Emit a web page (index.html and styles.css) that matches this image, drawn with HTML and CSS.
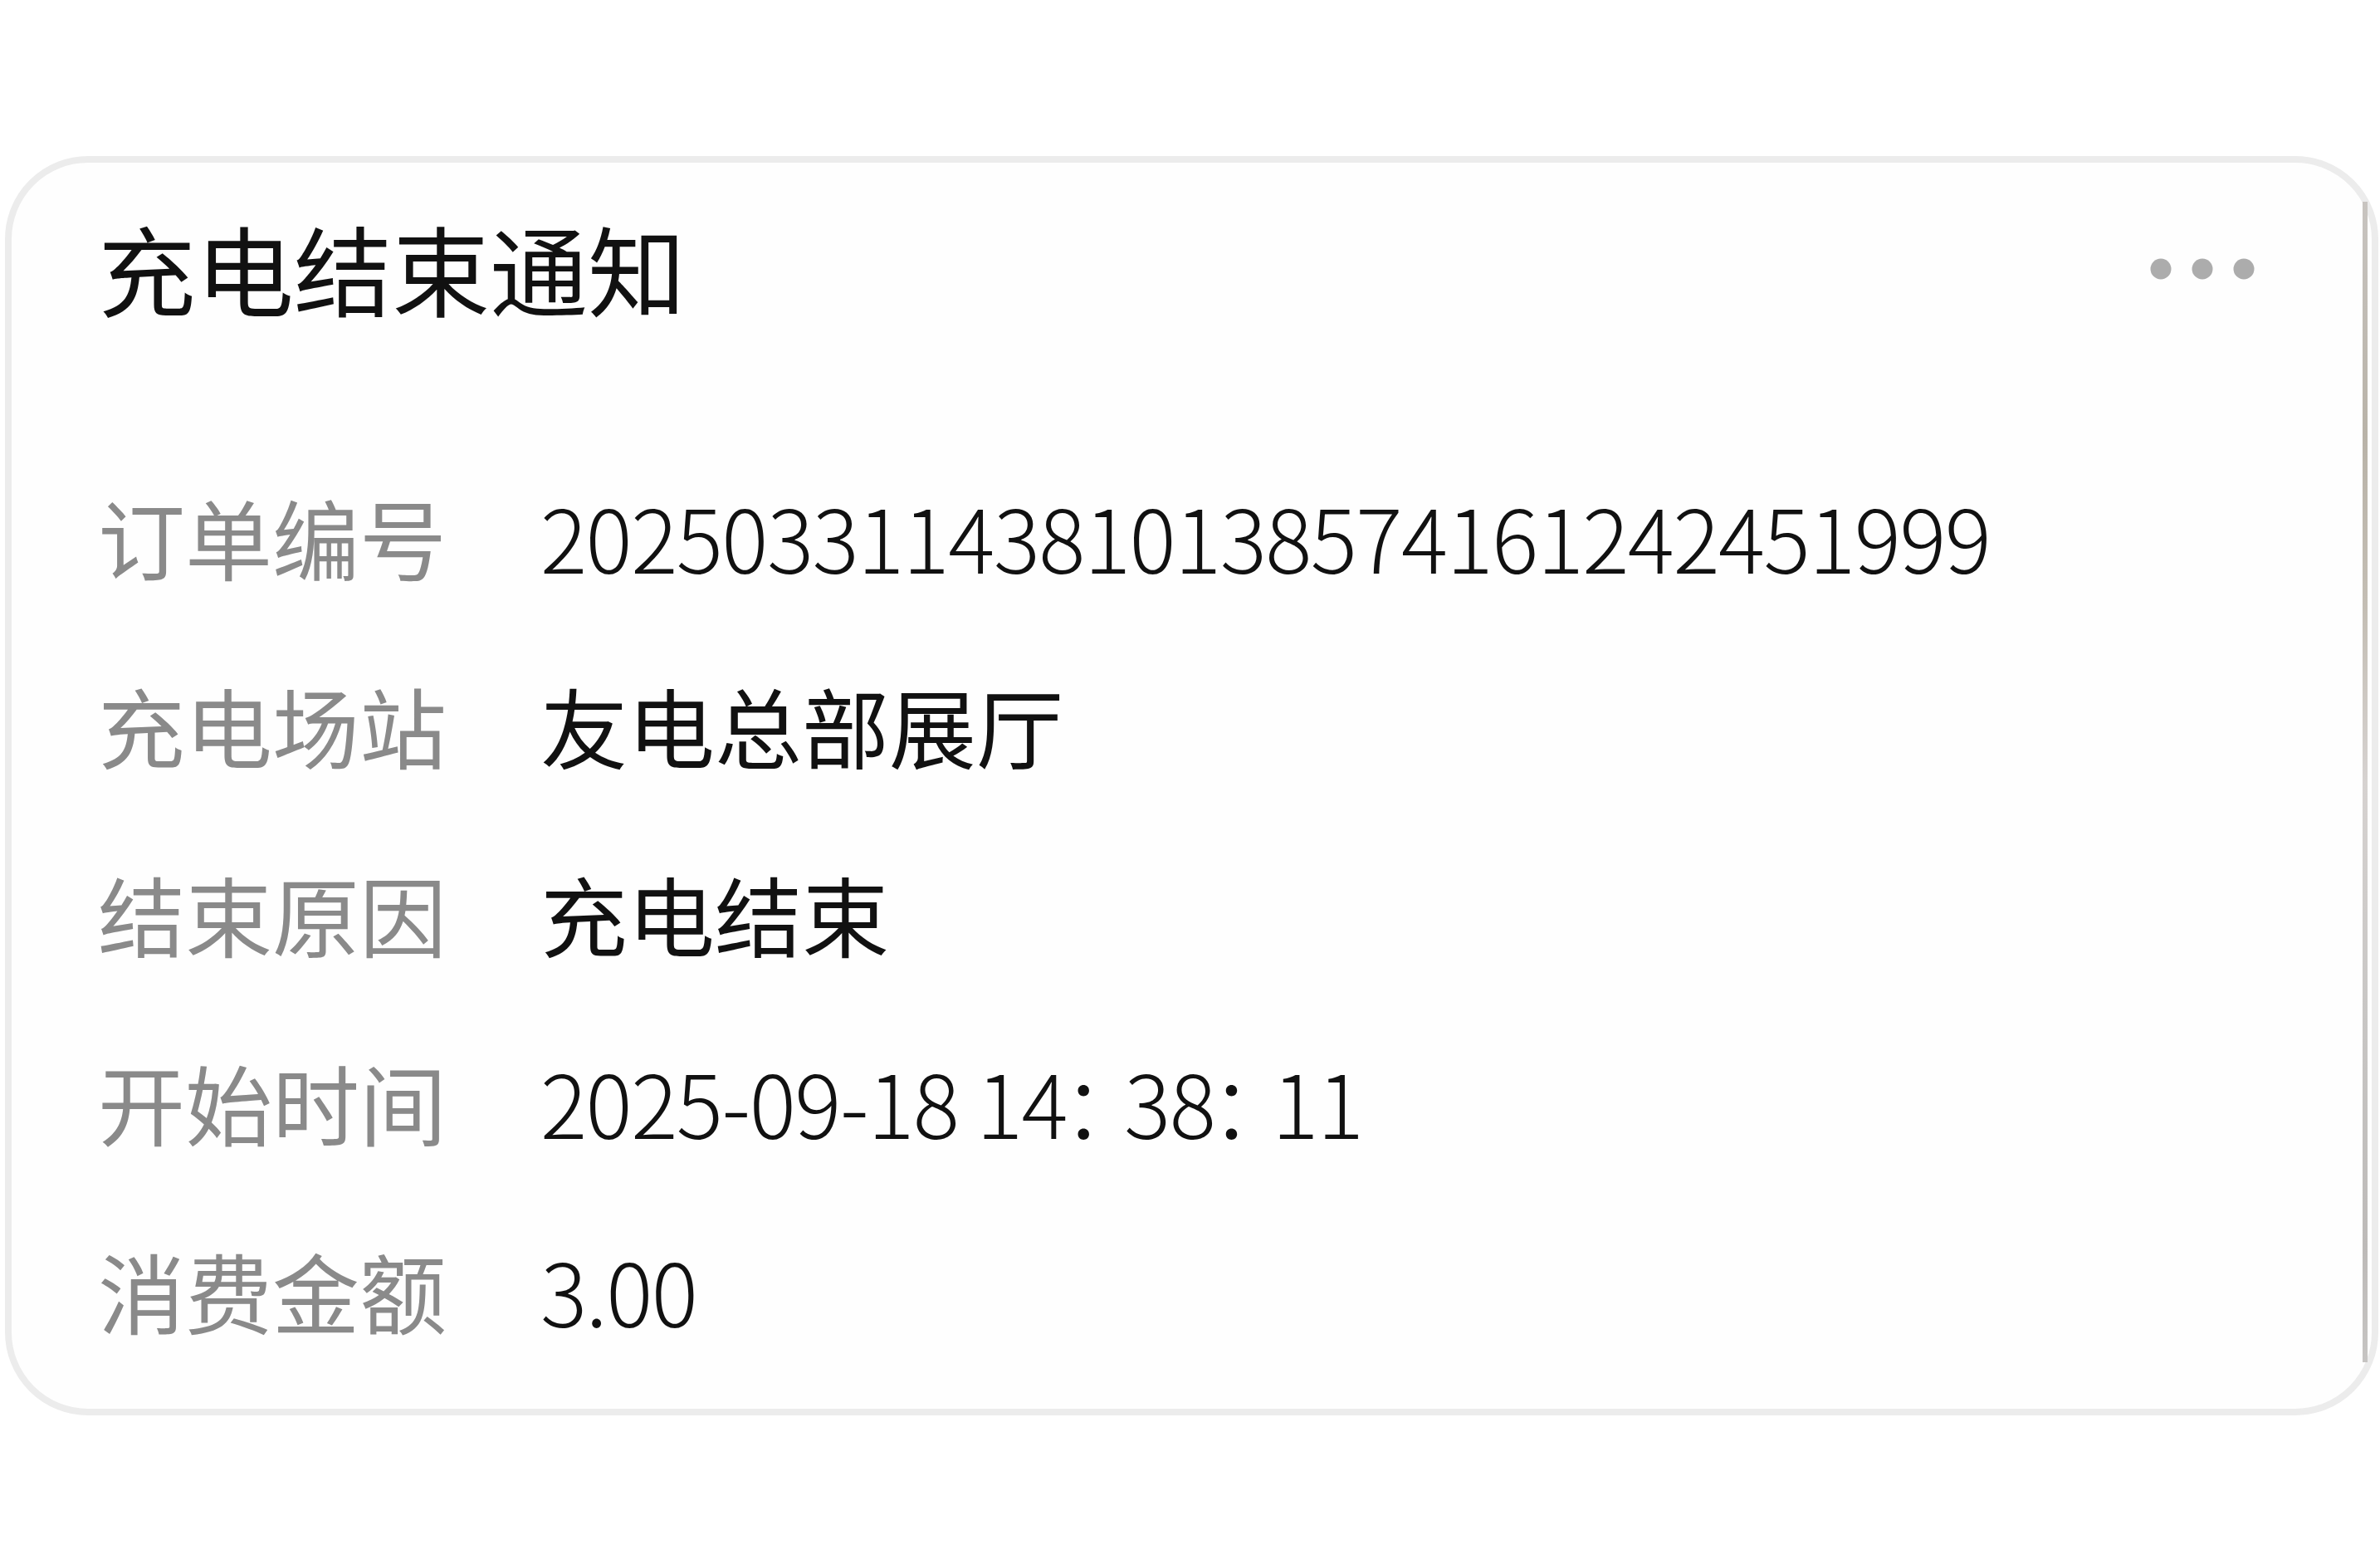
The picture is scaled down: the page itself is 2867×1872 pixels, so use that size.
FILE: index.html
```html
<!DOCTYPE html>
<html lang="zh-CN">
<head>
<meta charset="utf-8">
<title>充电结束通知</title>
<link rel="stylesheet" href="styles.css">
</head>
<body>
<div class="card">
  <div class="card-header">
    <div class="card-title">充电结束通知</div>
    <svg class="more" width="126" height="26" viewBox="0 0 126 26" aria-hidden="true">
      <circle cx="13" cy="13" r="12.5"/>
      <circle cx="63" cy="13" r="12.5"/>
      <circle cx="113" cy="13" r="12.5"/>
    </svg>
  </div>
  <div class="rows">
    <div class="label">订单编号</div><div class="value num">20250331143810138574161242451999</div>
    <div class="label">充电场站</div><div class="value">友电总部展厅</div>
    <div class="label">结束原因</div><div class="value">充电结束</div>
    <div class="label">开始时间</div><div class="value num">2025-09-18 14<span class="colon">：</span>38<span class="colon">：</span>11</div>
    <div class="label">消费金额</div><div class="value num">3.00</div>
  </div>
</div>
</body>
</html>
```

FILE: styles.css
```css
html, body {
  margin: 0;
  padding: 0;
  background: #ffffff;
}

body {
  font-family: "Noto Sans CJK SC", "Noto Sans", sans-serif;
  width: 2867px;
  height: 1872px;
  overflow: hidden;
}

.card {
  position: relative;
  box-sizing: border-box;
  margin: 188px 0 0 6px;
  width: 2859px;
  height: 1517px;
  border: 8px solid #ececec;
  border-radius: 100px;
  background: #fefefe;
  padding: 46px 141px 0 104px;
}

.card::after {
  content: "";
  position: absolute;
  right: 5px;
  top: 47px;
  bottom: 56px;
  width: 6px;
  background: linear-gradient(180deg, #c8c4c0 0%, #b9b3a8 20%, #c4beb4 35%, #d6d2d0 50%, #c8c6c4 70%, #bdbab8 90%, #c6c4c2 100%);
}

.card-header {
  display: flex;
  justify-content: space-between;
  align-items: center;
  height: 160px;
}

.card-title {
  font-size: 118px;
  line-height: 160px;
  color: #111111;
}

.more {
  display: block;
  fill: #acacac;
  margin-top: 4px;
}

.rows {
  margin-top: 130px;
  display: grid;
  grid-template-columns: 533px 1fr;
}

.label,
.value {
  font-size: 105px;
  line-height: 227px;
  white-space: nowrap;
}

.label {
  color: #8a8a8a;
}

.value {
  color: #111111;
}

.num {
  font-weight: 300;
  letter-spacing: -1.6px;
}

.colon {
  margin-left: -6px;
  letter-spacing: -30px;
}
```
